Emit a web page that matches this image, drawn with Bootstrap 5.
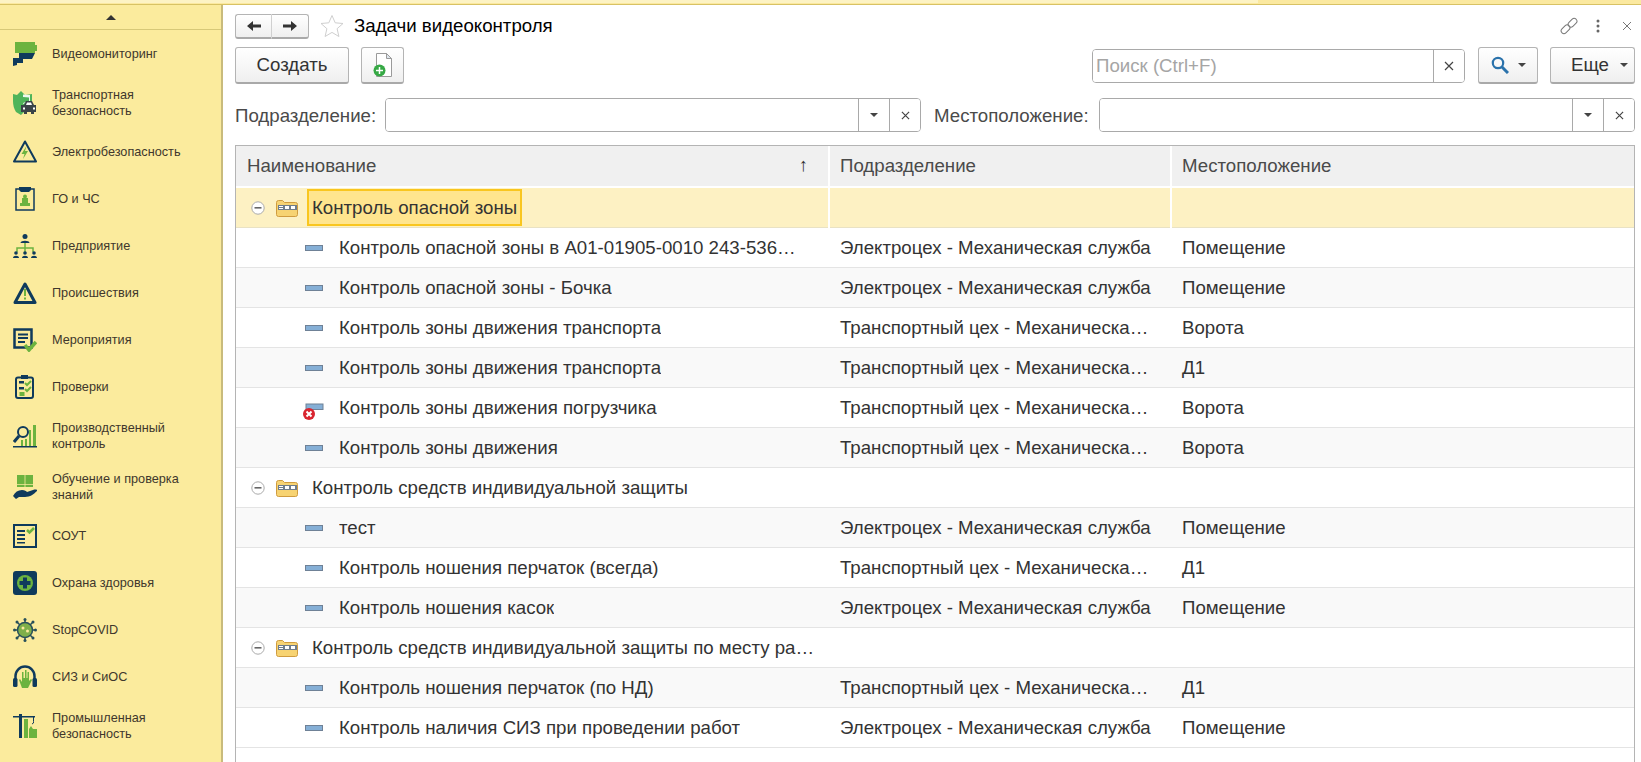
<!DOCTYPE html>
<html lang="ru">
<head>
<meta charset="utf-8">
<title>Задачи видеоконтроля</title>
<link href="https://cdn.jsdelivr.net/npm/bootstrap@5.3.0/dist/css/bootstrap.min.css" rel="stylesheet">
<style>
html,body{height:762px;overflow:hidden}
body{font-family:"Liberation Sans",Arial,sans-serif;font-size:18.67px;color:#333;background:#fff}
.topstrip{height:5px;background:#fbe9a0;border-bottom:1px solid #d8c264}
.topstrip-light{width:1258px;height:3px;background:#fdf3c4}
.shell{height:757px}
.sidebar{width:223px;flex:none;background:#fbeb9d;border-right:2px solid #c9bb7c}
.side-up{height:25px;border-bottom:1px solid #d7c878}
.tri-up{width:0;height:0;border-left:5px solid transparent;border-right:5px solid transparent;border-bottom:5px solid #333}
.side-item{height:47px;padding-left:13px;font-size:12.7px;line-height:16px;color:#40372c}
.side-item.two{height:51px}
.side-item svg{width:24px;height:24px;flex:none;margin-right:15px}
.work{width:1418px;flex:none;padding:0 6px 0 12px}
.titlebar{height:42px}
.navgroup{width:74px;height:25px}
.btn.gbtn{--bs-btn-padding-x:0;--bs-btn-padding-y:0;background:linear-gradient(#fff,#efefef);border:1px solid #b4b4b4;border-bottom:2px solid #a9a9a9;border-radius:3px;color:#333;font-size:18.67px;display:flex;align-items:center;justify-content:center;height:37px}
.navgroup .btn.gbtn{height:25px;width:37px;border-radius:0}
.navgroup .btn.gbtn:first-child{border-radius:3px 0 0 3px;border-right:1px solid #d0d0d0}
.navgroup .btn.gbtn:last-child{border-radius:0 3px 3px 0;border-left:0}
.star{margin:0 10px 0 11px}
.ttl{font-size:18.67px;color:#000;margin:0;font-weight:400;line-height:24px}
.titletools{padding-right:3px}
.tb-dots{margin:0 22px 0 18px}
.toolbar{height:38px;margin-bottom:13px;align-items:flex-start}
.create{width:114px;margin-right:12px}
.addbtn{width:43px}
.searchbox{width:373px;margin:2px 13px 0 0}
.fld{height:34px;border:1px solid #a9a9a9;border-radius:4px;overflow:hidden;background:#fff}
.fld-in{flex:1;min-width:0;border:0;outline:0;padding:0 3px;font:inherit;color:#333;background:#fff}
.fld-in::placeholder{color:#a5a5a5;opacity:1}
.fld-b{width:31px;flex:none;border-left:1px solid #a9a9a9;display:flex;align-items:center;justify-content:center;background:#fff}
.searchbtn{width:60px;margin-right:12px;gap:9px}
.btn.gbtn.morebtn{width:85px;gap:11px;justify-content:flex-start;padding-left:20px}
.caret-d{width:0;height:0;border-left:4px solid transparent;border-right:4px solid transparent;border-top:4px solid #444}
.filterrow{height:34px;margin-bottom:13px}
.lbl{color:#4a4a4a;white-space:nowrap;line-height:36px;align-self:flex-start}
.lbl1{width:150px}
.f1{width:536px;margin-right:13px}
.lbl2{width:165px}
.f2{width:536px}
.gridwrap{height:617px;border:1px solid #b4b4b4;border-bottom:0;overflow:hidden}
.table.tbl{table-layout:fixed;width:100%;margin:0;color:#333;--bs-table-bg:transparent;font-size:18.67px}
.tbl th,.tbl td{padding:0;height:40px;border:0;vertical-align:middle;white-space:nowrap;overflow:hidden;text-overflow:ellipsis;font-weight:400}
.tbl thead th{background:#f0f0f0;border-right:2px solid #fff;border-bottom:2px solid #fff;height:41px;color:#4a4a4a;padding-left:10px;position:relative}
.tbl thead th:first-child{padding-left:11px}
.tbl thead th:last-child{border-right:0}
.tbl tbody td{border-bottom:1px solid #e4e4e4;padding-left:11px}
.tbl tbody tr:nth-child(odd) td{background:#f9f9f9}
.tbl tbody tr:nth-child(even) td{background:#fff}
.tbl tbody tr.cur td{background:#fdf1c3;border-bottom-color:#e9e2c4}
.tbl tbody tr.cur td+td{border-left:2px solid #fff}
.sortarrow{position:absolute;right:20px;top:10px;font-size:18.67px;line-height:18px;color:#333}
.namecell{height:39px}
.expander{width:14px;height:14px;flex:none;margin:0 11px 0 15px}
.folder{width:22px;height:18px;flex:none;margin-right:14px}
.focuscell{background:#ffe58e;border:2px solid #f9c61f;height:37px;padding:0 3px;margin-left:-5px;line-height:33px}
.itemicon{width:18px;height:18px;flex:none;margin:0 16px 0 69px}
.g-nm{min-width:0;overflow:hidden;text-overflow:ellipsis}
.tbl tbody td.c1{padding-left:0}
</style>
</head>
<body>
<div class="topstrip"><div class="topstrip-light"></div></div>
<div class="shell d-flex">
  <aside class="sidebar">
    <div class="side-up d-flex align-items-center justify-content-center"><span class="tri-up"></span></div>

    <div class="side-item d-flex align-items-center">
      <svg viewBox="0 0 24 24"><path fill="#6cb33f" d="M2 0h20v3h2v6h-2v2H2z"/><path fill="#0f3a5c" d="M0 16h6v-5h16l-3 6h-9v4H4v2l-4 1z"/></svg><span>Видеомониторинг</span>
    </div>
    <div class="side-item two d-flex align-items-center">
      <svg viewBox="0 0 24 24"><path fill="#4fb45a" d="M0 3l4 1 4-4 4 4 7-1v9l-7 1v7l-4 4-5-3C1 18 0 14 0 10z"/><path fill="#fff" d="M10 3.500l7 .5v6l-7 3z" opacity=".9"/><path fill="#4fb45a" d="M10 6l6 .5V10l-6 2z"/><path fill="#3a4448" d="M11 14l2-4h6l2 4h2v7h-2v2h-3v-2h-4v2h-3v-2H8v-7z"/><path fill="#fff" d="M13 14l1-2.500h4l1 2.500zM10 16.500h2v2h-2zM20 16.500h2v2h-2z"/></svg><span>Транспортная<br>безопасность</span>
    </div>
    <div class="side-item d-flex align-items-center">
      <svg viewBox="0 0 24 24"><path fill="none" stroke="#0f3a5c" stroke-width="2" stroke-linejoin="round" d="M12 1.500L23 21.500H1z"/><path fill="#6cb33f" d="M13.500 6l-5 8h3l-1.500 5 5-8h-3z"/></svg><span>Электробезопасность</span>
    </div>
    <div class="side-item d-flex align-items-center">
      <svg viewBox="0 0 24 24"><rect x="3" y="2" width="18" height="21" fill="none" stroke="#0f3a5c" stroke-width="1.500"/><path fill="#0f3a5c" d="M6 0h12v3l-2 2H8L6 3z"/><path fill="#6cb33f" d="M9 11h6v5h2v3H7v-3h2z"/><circle cx="12" cy="9.500" r="2" fill="#6cb33f"/></svg><span>ГО и ЧС</span>
    </div>
    <div class="side-item d-flex align-items-center">
      <svg viewBox="0 0 24 24"><path fill="none" stroke="#6cb33f" stroke-width="1.500" d="M12 8v10M4 18v-4h16v4"/><circle cx="12" cy="2.500" r="2.500" fill="#0f3a5c"/><path fill="#0f3a5c" d="M7.500 9c0-3 9-3 9 0z"/><g fill="#0f3a5c"><circle cx="3" cy="19" r="1.800"/><path d="M0 24c0-3 6-3 6 0z"/><circle cx="12" cy="19" r="1.800"/><path d="M9 24c0-3 6-3 6 0z"/><circle cx="21" cy="19" r="1.800"/><path d="M18 24c0-3 6-3 6 0z"/></g></svg><span>Предприятие</span>
    </div>
    <div class="side-item d-flex align-items-center">
      <svg viewBox="0 0 24 24"><path fill="none" stroke="#0f3a5c" stroke-width="3" stroke-linejoin="round" d="M12 3L22 21.500H2z"/><rect x="11" y="8" width="2" height="7" fill="#6cb33f"/><rect x="11" y="16.500" width="2" height="2" fill="#6cb33f"/></svg><span>Происшествия</span>
    </div>
    <div class="side-item d-flex align-items-center">
      <svg viewBox="0 0 24 24"><path fill="none" stroke="#0f3a5c" stroke-width="2.500" d="M1.500 1.500h17v18h-17z"/><path fill="#0f3a5c" d="M5 5.500h10v2H5zM5 9h10v2H5zM5 13h7v2H5z"/><path fill="none" stroke="#6cb33f" stroke-width="3.500" d="M12 17l4 5 7-8"/></svg><span>Мероприятия</span>
    </div>
    <div class="side-item d-flex align-items-center">
      <svg viewBox="0 0 24 24"><rect x="3" y="2.500" width="17" height="20.500" rx="2" fill="none" stroke="#0f3a5c" stroke-width="2"/><rect x="8" y="0" width="7" height="4" fill="#0f3a5c"/><path fill="none" stroke="#6cb33f" stroke-width="2" d="M12 8l2 2 4-4M12 14l2 2 4-4"/><path fill="#0f3a5c" d="M6 6h5v2.500H6zM6 12h5v2.500H6z"/><rect x="6.500" y="17" width="5" height="4" fill="#6cb33f"/></svg><span>Проверки</span>
    </div>
    <div class="side-item two d-flex align-items-center">
      <svg viewBox="0 0 24 24"><path fill="#6cb33f" d="M8 16h2v6H8zM12 15h2v7h-2zM16 6h2v16h-2zM20 1h3v21h-3z"/><circle cx="10" cy="8" r="5" fill="#fbeb9d" stroke="#0f3a5c" stroke-width="2"/><path stroke="#0f3a5c" stroke-width="3" d="M6 12l-5 6"/><rect y="22" width="24" height="1.500" fill="#0f3a5c"/></svg><span>Производственный<br>контроль</span>
    </div>
    <div class="side-item two d-flex align-items-center">
      <svg viewBox="0 0 24 24"><path fill="#6cb33f" d="M4 0h16v12H4z"/><path fill="#fbeb9d" d="M11.600 0h.8v12h-.8zM4 9h16v.700H4z"/><path fill="#0f3a5c" d="M0 21c2-4 5-6 9-6 3 0 4 1 5 2l6-2c3-1 5 0 4 1-3 3-7 6-12 6H6l-3 2z"/></svg><span>Обучение и проверка<br>знаний</span>
    </div>
    <div class="side-item d-flex align-items-center">
      <svg viewBox="0 0 24 24"><rect x="1" y="1" width="22" height="22" fill="none" stroke="#0f3a5c" stroke-width="2"/><path fill="#0f3a5c" d="M4 6h8v2H4zM4 10h8v2H4zM4 14h8v2H4zM4 18h8v1.500H4z"/><path fill="none" stroke="#6cb33f" stroke-width="2.500" d="M14 6l2.500 2.500L21 4"/></svg><span>СОУТ</span>
    </div>
    <div class="side-item d-flex align-items-center">
      <svg viewBox="0 0 24 24"><rect width="24" height="24" rx="3" fill="#0f3a5c"/><circle cx="12" cy="12" r="8" fill="#6cb33f"/><path fill="#0f3a5c" d="M10 6.500h4V10h3.500v4H14v3.500h-4V14H6.500v-4H10z"/></svg><span>Охрана здоровья</span>
    </div>
    <div class="side-item d-flex align-items-center">
      <svg viewBox="0 0 24 24"><g stroke="#28505a" stroke-width="1.500"><path d="M12 1v22M1 12h22M4 4l16 16M20 4L4 20"/></g><g fill="#28505a"><circle cx="12" cy="1.500" r="1.500"/><circle cx="12" cy="22.500" r="1.500"/><circle cx="1.500" cy="12" r="1.500"/><circle cx="22.500" cy="12" r="1.500"/><circle cx="4" cy="4" r="1.500"/><circle cx="20" cy="4" r="1.500"/><circle cx="4" cy="20" r="1.500"/><circle cx="20" cy="20" r="1.500"/></g><circle cx="12" cy="12" r="7.500" fill="#7fb04a" stroke="#28505a" stroke-width="1.500"/><circle cx="10" cy="10" r="1.500" fill="#fbeb9d"/><circle cx="14.500" cy="13" r="1.500" fill="#fbeb9d"/></svg><span>StopCOVID</span>
    </div>
    <div class="side-item d-flex align-items-center">
      <svg viewBox="0 0 24 24"><path fill="none" stroke="#0f3a5c" stroke-width="2.500" d="M2.500 15V11a9.500 9.500 0 0 1 19 0v4"/><rect y="13" width="4.500" height="9" rx="1.500" fill="#0f3a5c"/><rect x="19.500" y="13" width="4.500" height="9" rx="1.500" fill="#0f3a5c"/><path fill="#6cb33f" d="M9 7h1.500v6H12V5h1.500v8h1V7H16v9l2-2 1 1-4 8H9l-3-8 1 -1 2 3z"/></svg><span>СИЗ и СиОС</span>
    </div>
    <div class="side-item two d-flex align-items-center">
      <svg viewBox="0 0 24 24"><path fill="#0f3a5c" d="M0 2h22v1.500H0zM6 0h3v24H6zM20 3.500h1v4h-1z"/><path fill="none" stroke="#0f3a5c" d="M20.500 7.500v1.500l-1.500 1"/><path fill="#6cb33f" d="M11 5h4v19h-4zM16 15l2-3 2 3h4v9h-8z"/></svg><span>Промышленная<br>безопасность</span>
    </div>
  </aside>

  <main class="work">
    <div class="titlebar d-flex align-items-center">
      <div class="navgroup d-flex">
        <button class="btn gbtn" type="button"><svg width="14" height="12" viewBox="0 0 14 12"><path fill="#333" d="M0 6l6-5v3.500h8v3H6V11z"/></svg></button>
        <button class="btn gbtn" type="button"><svg width="14" height="12" viewBox="0 0 14 12"><path fill="#333" d="M14 6L8 1v3.500H0v3h8V11z"/></svg></button>
      </div>
      <svg class="star" width="24" height="24" viewBox="0 0 24 24"><path fill="#fff" stroke="#cfcfcf" d="M12 1.500l3.200 7.300 7.800.7-5.900 5.200 1.800 7.800L12 18.400l-6.900 4.100 1.800-7.800L1 9.500l7.800-.7z"/></svg>
      <h1 class="ttl">Задачи видеоконтроля</h1>
      <div class="ms-auto d-flex align-items-center titletools">
        <svg width="18" height="18" viewBox="0 0 18 18"><g fill="none" stroke="#777"><rect x="7.500" y="3" width="10" height="5.500" rx="2.700" transform="rotate(-45 12.500 5.700)"/><rect x=".5" y="9.500" width="10" height="5.500" rx="2.700" transform="rotate(-45 5.500 12.200)"/></g></svg>
        <svg width="4" height="14" viewBox="0 0 4 14" class="tb-dots"><g fill="#666"><circle cx="2" cy="2" r="1.500"/><circle cx="2" cy="7" r="1.500"/><circle cx="2" cy="12" r="1.500"/></g></svg>
        <svg width="10" height="10" viewBox="0 0 10 10"><path stroke="#777" d="M1 1l8 8M9 1L1 9"/></svg>
      </div>
    </div>

    <div class="toolbar d-flex">
      <button class="btn gbtn create" type="button">Создать</button>
      <button class="btn gbtn addbtn" type="button">
        <svg width="20" height="24" viewBox="0 0 20 24"><path fill="#fff" stroke="#9a9a9a" d="M3.500.5h10l5 5v18h-15z"/><path fill="#dfe6ee" stroke="#9a9a9a" d="M13.500.5v5h5z"/><circle cx="6.500" cy="17.500" r="6" fill="#36a945"/><path stroke="#fff" stroke-width="1.500" d="M6.500 14v7M3 17.500h7"/></svg>
      </button>
      <div class="searchbox fld d-flex ms-auto">
        <input class="fld-in" type="text" placeholder="Поиск (Ctrl+F)" aria-label="Поиск">
        <span class="fld-b"><svg width="10" height="10" viewBox="0 0 10 10"><path stroke="#444" stroke-width="1.200" d="M1 1l8 8M9 1L1 9"/></svg></span>
      </div>
      <button class="btn gbtn searchbtn" type="button">
        <svg width="18" height="18" viewBox="0 0 18 18"><circle cx="7" cy="7" r="5.200" fill="none" stroke="#2a72ab" stroke-width="2.200"/><path stroke="#2a72ab" stroke-width="3" d="M11 11l6 6"/></svg><span class="caret-d"></span>
      </button>
      <button class="btn gbtn morebtn" type="button">Еще<span class="caret-d"></span></button>
    </div>

    <div class="filterrow d-flex align-items-center">
      <span class="lbl lbl1">Подразделение:</span>
      <div class="fld f1 d-flex">
        <input class="fld-in" type="text" aria-label="Подразделение">
        <span class="fld-b"><span class="caret-d"></span></span>
        <span class="fld-b"><svg width="9" height="9" viewBox="0 0 10 10"><path stroke="#444" stroke-width="1.300" d="M1 1l8 8M9 1L1 9"/></svg></span>
      </div>
      <span class="lbl lbl2">Местоположение:</span>
      <div class="fld f2 d-flex">
        <input class="fld-in" type="text" aria-label="Местоположение">
        <span class="fld-b"><span class="caret-d"></span></span>
        <span class="fld-b"><svg width="9" height="9" viewBox="0 0 10 10"><path stroke="#444" stroke-width="1.300" d="M1 1l8 8M9 1L1 9"/></svg></span>
      </div>
    </div>

    <div class="gridwrap">
      <table class="table tbl">
        <colgroup><col style="width:593px"><col style="width:342px"><col></colgroup>
        <thead>
          <tr><th>Наименование<span class="sortarrow">↑</span></th><th>Подразделение</th><th>Местоположение</th></tr>
        </thead>
        <tbody>
          <tr class="cur"><td class="c1"><div class="namecell d-flex align-items-center">
            <svg class="expander" viewBox="0 0 14 14"><circle cx="7" cy="7" r="6.200" fill="#fff" stroke="#aaa"/><rect x="3.500" y="6" width="7" height="1.600" fill="#666"/></svg>
            <svg class="folder" viewBox="0 0 22 18"><path fill="#f7d372" stroke="#d09c3f" d="M.5 3.500a2 2 0 0 1 2-2h4l2 2h11a2 2 0 0 1 2 2v10a2 2 0 0 1-2 2h-17a2 2 0 0 1-2-2z"/><rect x="2" y="6" width="19" height="5" fill="#6f7d8a"/><path fill="#fff" d="M3 7h4v1H3zM3 9h4v1H3zM9 7h4v3H9zM15 7h4v3h-4z"/></svg>
            <span class="focuscell">Контроль опасной зоны</span></div></td><td></td><td></td></tr>

          <tr><td class="c1"><div class="d-flex align-items-center"><svg class="itemicon" viewBox="0 0 18 18"><rect x=".5" y="6.500" width="17" height="5" fill="#85afd6" stroke="#6f8196"/></svg><span class="g-nm">Контроль опасной зоны в А01-01905-0010 243-536…</span></div></td><td>Электроцех - Механическая служба</td><td>Помещение</td></tr>
          <tr><td class="c1"><div class="d-flex align-items-center"><svg class="itemicon" viewBox="0 0 18 18"><rect x=".5" y="6.500" width="17" height="5" fill="#85afd6" stroke="#6f8196"/></svg><span class="g-nm">Контроль опасной зоны - Бочка</span></div></td><td>Электроцех - Механическая служба</td><td>Помещение</td></tr>
          <tr><td class="c1"><div class="d-flex align-items-center"><svg class="itemicon" viewBox="0 0 18 18"><rect x=".5" y="6.500" width="17" height="5" fill="#85afd6" stroke="#6f8196"/></svg><span class="g-nm">Контроль зоны движения транспорта</span></div></td><td>Транспортный цех - Механическа…</td><td>Ворота</td></tr>
          <tr><td class="c1"><div class="d-flex align-items-center"><svg class="itemicon" viewBox="0 0 18 18"><rect x=".5" y="6.500" width="17" height="5" fill="#85afd6" stroke="#6f8196"/></svg><span class="g-nm">Контроль зоны движения транспорта</span></div></td><td>Транспортный цех - Механическа…</td><td>Д1</td></tr>
          <tr><td class="c1"><div class="d-flex align-items-center"><svg class="itemicon err" viewBox="0 0 18 18" overflow="visible"><rect x="1" y="5" width="17" height="5.500" fill="#85afd6" stroke="#6f8196"/><circle cx="4" cy="15" r="6" fill="#d9252f"/><path stroke="#fff" stroke-width="2" d="M1.500 12.500l5 5M6.500 12.500l-5 5"/></svg><span class="g-nm">Контроль зоны движения погрузчика</span></div></td><td>Транспортный цех - Механическа…</td><td>Ворота</td></tr>
          <tr><td class="c1"><div class="d-flex align-items-center"><svg class="itemicon" viewBox="0 0 18 18"><rect x=".5" y="6.500" width="17" height="5" fill="#85afd6" stroke="#6f8196"/></svg><span class="g-nm">Контроль зоны движения</span></div></td><td>Транспортный цех - Механическа…</td><td>Ворота</td></tr>

          <tr><td class="c1"><div class="d-flex align-items-center">
            <svg class="expander" viewBox="0 0 14 14"><circle cx="7" cy="7" r="6.200" fill="#fff" stroke="#aaa"/><rect x="3.500" y="6" width="7" height="1.600" fill="#666"/></svg>
            <svg class="folder" viewBox="0 0 22 18"><path fill="#f7d372" stroke="#d09c3f" d="M.5 3.500a2 2 0 0 1 2-2h4l2 2h11a2 2 0 0 1 2 2v10a2 2 0 0 1-2 2h-17a2 2 0 0 1-2-2z"/><rect x="2" y="6" width="19" height="5" fill="#6f7d8a"/><path fill="#fff" d="M3 7h4v1H3zM3 9h4v1H3zM9 7h4v3H9zM15 7h4v3h-4z"/></svg>
            <span class="g-nm">Контроль средств индивидуальной защиты</span></div></td><td></td><td></td></tr>
          <tr><td class="c1"><div class="d-flex align-items-center"><svg class="itemicon" viewBox="0 0 18 18"><rect x=".5" y="6.500" width="17" height="5" fill="#85afd6" stroke="#6f8196"/></svg><span class="g-nm">тест</span></div></td><td>Электроцех - Механическая служба</td><td>Помещение</td></tr>
          <tr><td class="c1"><div class="d-flex align-items-center"><svg class="itemicon" viewBox="0 0 18 18"><rect x=".5" y="6.500" width="17" height="5" fill="#85afd6" stroke="#6f8196"/></svg><span class="g-nm">Контроль ношения перчаток (всегда)</span></div></td><td>Транспортный цех - Механическа…</td><td>Д1</td></tr>
          <tr><td class="c1"><div class="d-flex align-items-center"><svg class="itemicon" viewBox="0 0 18 18"><rect x=".5" y="6.500" width="17" height="5" fill="#85afd6" stroke="#6f8196"/></svg><span class="g-nm">Контроль ношения касок</span></div></td><td>Электроцех - Механическая служба</td><td>Помещение</td></tr>

          <tr><td class="c1"><div class="d-flex align-items-center">
            <svg class="expander" viewBox="0 0 14 14"><circle cx="7" cy="7" r="6.200" fill="#fff" stroke="#aaa"/><rect x="3.500" y="6" width="7" height="1.600" fill="#666"/></svg>
            <svg class="folder" viewBox="0 0 22 18"><path fill="#f7d372" stroke="#d09c3f" d="M.5 3.500a2 2 0 0 1 2-2h4l2 2h11a2 2 0 0 1 2 2v10a2 2 0 0 1-2 2h-17a2 2 0 0 1-2-2z"/><rect x="2" y="6" width="19" height="5" fill="#6f7d8a"/><path fill="#fff" d="M3 7h4v1H3zM3 9h4v1H3zM9 7h4v3H9zM15 7h4v3h-4z"/></svg>
            <span class="g-nm">Контроль средств индивидуальной защиты по месту ра…</span></div></td><td></td><td></td></tr>
          <tr><td class="c1"><div class="d-flex align-items-center"><svg class="itemicon" viewBox="0 0 18 18"><rect x=".5" y="6.500" width="17" height="5" fill="#85afd6" stroke="#6f8196"/></svg><span class="g-nm">Контроль ношения перчаток (по НД)</span></div></td><td>Транспортный цех - Механическа…</td><td>Д1</td></tr>
          <tr><td class="c1"><div class="d-flex align-items-center"><svg class="itemicon" viewBox="0 0 18 18"><rect x=".5" y="6.500" width="17" height="5" fill="#85afd6" stroke="#6f8196"/></svg><span class="g-nm">Контроль наличия СИЗ при проведении работ</span></div></td><td>Электроцех - Механическая служба</td><td>Помещение</td></tr>
        </tbody>
      </table>
    </div>
  </main>
</div>
</body>
</html>
